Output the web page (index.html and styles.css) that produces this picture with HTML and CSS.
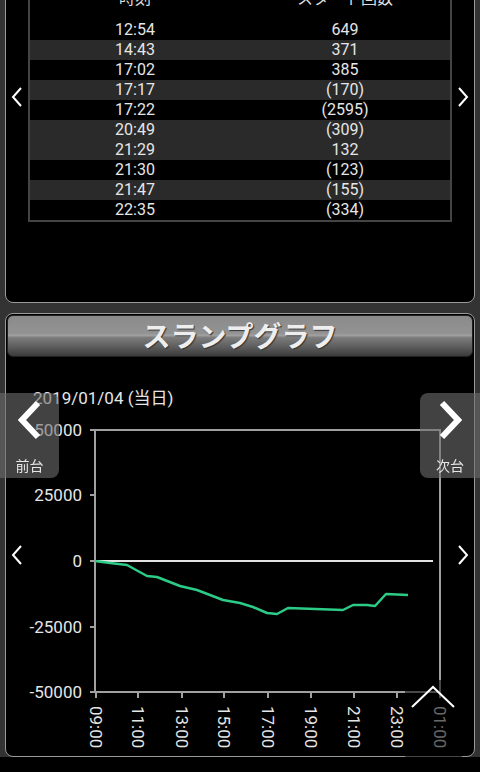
FILE: index.html
```html
<!DOCTYPE html>
<html lang="ja">
<head>
	<meta charset="UTF-8">
	<title>スランプグラフ</title>
	<link rel="stylesheet" href="styles.css">
</head>
<body>
	<div class="page">
		<section class="panel panel_list">
			<div class="side"><svg class="chev" width="12" height="20" viewBox="0 0 12 20"><polyline points="10,1 2,10 10,19"/></svg></div>
			<table class="hist">
				<thead>
					<tr><th>時刻</th><th>スタート回数</th></tr>
				</thead>
				<tbody>
					<tr><td>12:54</td><td>649</td></tr>
					<tr class="alt"><td>14:43</td><td>371</td></tr>
					<tr><td>17:02</td><td>385</td></tr>
					<tr class="alt"><td>17:17</td><td>(170)</td></tr>
					<tr><td>17:22</td><td>(2595)</td></tr>
					<tr class="alt"><td>20:49</td><td>(309)</td></tr>
					<tr class="alt"><td>21:29</td><td>132</td></tr>
					<tr><td>21:30</td><td>(123)</td></tr>
					<tr class="alt"><td>21:47</td><td>(155)</td></tr>
					<tr><td>22:35</td><td>(334)</td></tr>
				</tbody>
			</table>
			<div class="side"><svg class="chev" width="12" height="20" viewBox="0 0 12 20"><polyline points="2,1 10,10 2,19"/></svg></div>
		</section>

		<section class="panel panel_graph">
			<h2 class="bar">スランプグラフ</h2>
			<div class="graph_body">
				<div class="side"><svg class="chev" width="12" height="20" viewBox="0 0 12 20"><polyline points="10,1 2,10 10,19"/></svg></div>
				<div class="graph">
					<p class="date">2019/01/04 (当日)</p>
					<svg class="chart" width="424" height="340" viewBox="0 0 424 340">
						<!-- 枠と目盛り -->
						<path class="axis" d="M62 18H67M62 83H67M62 149H67M62 215H67M62 280H67"/>
						<path class="axis" d="M67 18H413M412 18V281M67 17V281M66 280H413"/>
						<path class="axis" d="M68 280V286M110 280V286M154 280V286M196 280V286M240 280V286M283 280V286M326 280V286M369 280V286M412 280V286"/>
						<path class="zero" d="M67 149H405"/>
						<g class="ylab">
							<text x="54" y="24">50000</text>
							<text x="54" y="89">25000</text>
							<text x="54" y="155">0</text>
							<text x="54" y="221">-25000</text>
							<text x="54" y="286">-50000</text>
						</g>
						<g class="xlab">
							<text transform="translate(62,294) rotate(90)">09:00</text>
							<text transform="translate(104,294) rotate(90)">11:00</text>
							<text transform="translate(148,294) rotate(90)">13:00</text>
							<text transform="translate(190,294) rotate(90)">15:00</text>
							<text transform="translate(234,294) rotate(90)">17:00</text>
							<text transform="translate(277,294) rotate(90)">19:00</text>
							<text transform="translate(320,294) rotate(90)">21:00</text>
							<text transform="translate(363,294) rotate(90)">23:00</text>
							<text transform="translate(406,294) rotate(90)">01:00</text>
						</g>
						<polyline class="slump" points="67,149 82,151 99,153 119,164 129,165 152,174 169,178 195,188 212,191 225,195 239,201 249,202 260,196 315,198 325,193 339,193 347,194 358,182 380,183"/>
					</svg>
				</div>
				<div class="side"><svg class="chev" width="12" height="20" viewBox="0 0 12 20"><polyline points="2,1 10,10 2,19"/></svg></div>
			</div>
		</section>
	</div>
	<div class="foot"></div>

	<a class="nav nav_prev" href="#">
		<svg width="24" height="40" viewBox="0 0 24 40"><polyline points="20,3 4,20 20,37"/></svg>
		<span>前台</span>
	</a>
	<a class="nav nav_next" href="#">
		<svg width="24" height="40" viewBox="0 0 24 40"><polyline points="4,3 20,20 4,37"/></svg>
		<span>次台</span>
	</a>
	<a class="to_top" href="#">
		<svg width="56" height="30" viewBox="0 0 56 30"><polyline points="7,27 28,7 49,27"/></svg>
	</a>
</body>
</html>
```

FILE: styles.css
```css
*{
	margin:0;
	padding:0;
	box-sizing:border-box;
}

body{
	background-color:#333;
	color:#e6e6e6;
	font-family:Roboto, "Noto Sans CJK JP", sans-serif;
	font-size:16px;
	overflow:hidden;
}

a{
	color:inherit;
	text-decoration:none;
}

.page{
	padding:0 5px;
}

.panel{
	background-color:#000;
	border:1px solid #9a9a9a;
	border-radius:8px;
}

.panel_list{
	margin-top:-30px;
	display:flex;
	padding:10px 0 80px;
}

.side{
	width:22px;
	display:flex;
	align-items:center;
	justify-content:center;
}

.panel_list .side{
	padding-bottom:10px;
}

.chev polyline{
	fill:none;
	stroke:#fff;
	stroke-width:2;
}

.hist{
	width:424px;
	border:2px solid #444;
	border-spacing:0;
	table-layout:fixed;
}

.hist th{
	font-weight:normal;
	line-height:20px;
	padding:6px 0 11px;
	color:#ddd;
}

.hist td{
	height:20px;
	line-height:20px;
	text-align:center;
}

.hist .alt td{
	background-color:#2a2a2a;
}

.panel_graph{
	margin-top:10px;
	padding:1px 0 4px;
}

.bar{
	margin:0 1px;
	height:42px;
	border:1px solid #222;
	border-radius:6px;
	background:linear-gradient(to bottom, #8a8a8a 0%, #939393 44%, #a3a3a3 48%, #7c7c7c 54%, #5c5c5c 78%, #3a3a3a 100%);
	color:#eee;
	font-family:"Noto Sans CJK JP", sans-serif;
	font-size:28px;
	font-weight:bold;
	line-height:38px;
	text-align:center;
	text-shadow:1px 1px 1px #333;
}

.graph_body{
	display:flex;
}

.graph{
	width:424px;
}

.date{
	padding:31px 0 4px 5px;
	line-height:20px;
	font-size:17px;
}

.chart{
	display:block;
}

.axis{
	fill:none;
	stroke:#a0a0a0;
	stroke-width:2;
}

.zero{
	fill:none;
	stroke:#e2e2e2;
	stroke-width:2;
}

.ylab text{
	fill:#e6e6e6;
	font-size:17px;
	text-anchor:end;
}

.xlab text{
	fill:#e6e6e6;
	font-size:17px;
}

.slump{
	fill:none;
	stroke:#2ccb86;
	stroke-width:2.5;
	stroke-linejoin:round;
}

.foot{
	height:20px;
	background-color:#000;
}

.nav{
	position:fixed;
	top:393px;
	width:59px;
	height:85px;
	background-color:rgba(110,110,110,0.6);
	display:flex;
	flex-direction:column;
	align-items:center;
	padding-top:7px;
}

.nav_prev{
	left:0;
	border-radius:0 8px 8px 0;
}

.nav_next{
	right:0;
	width:60px;
	border-radius:8px 0 0 8px;
}

.nav svg polyline{
	fill:none;
	stroke:#fff;
	stroke-width:6;
}

.nav span{
	font-family:"Noto Sans CJK JP", sans-serif;
	font-size:14px;
	line-height:20px;
	margin-top:15px;
}

.to_top{
	position:fixed;
	right:18px;
	bottom:0;
	width:57px;
	height:92px;
	background-color:rgba(0,0,0,0.55);
}

.to_top svg{
	display:block;
}

.to_top polyline{
	fill:none;
	stroke:#fff;
	stroke-width:2;
}
```
